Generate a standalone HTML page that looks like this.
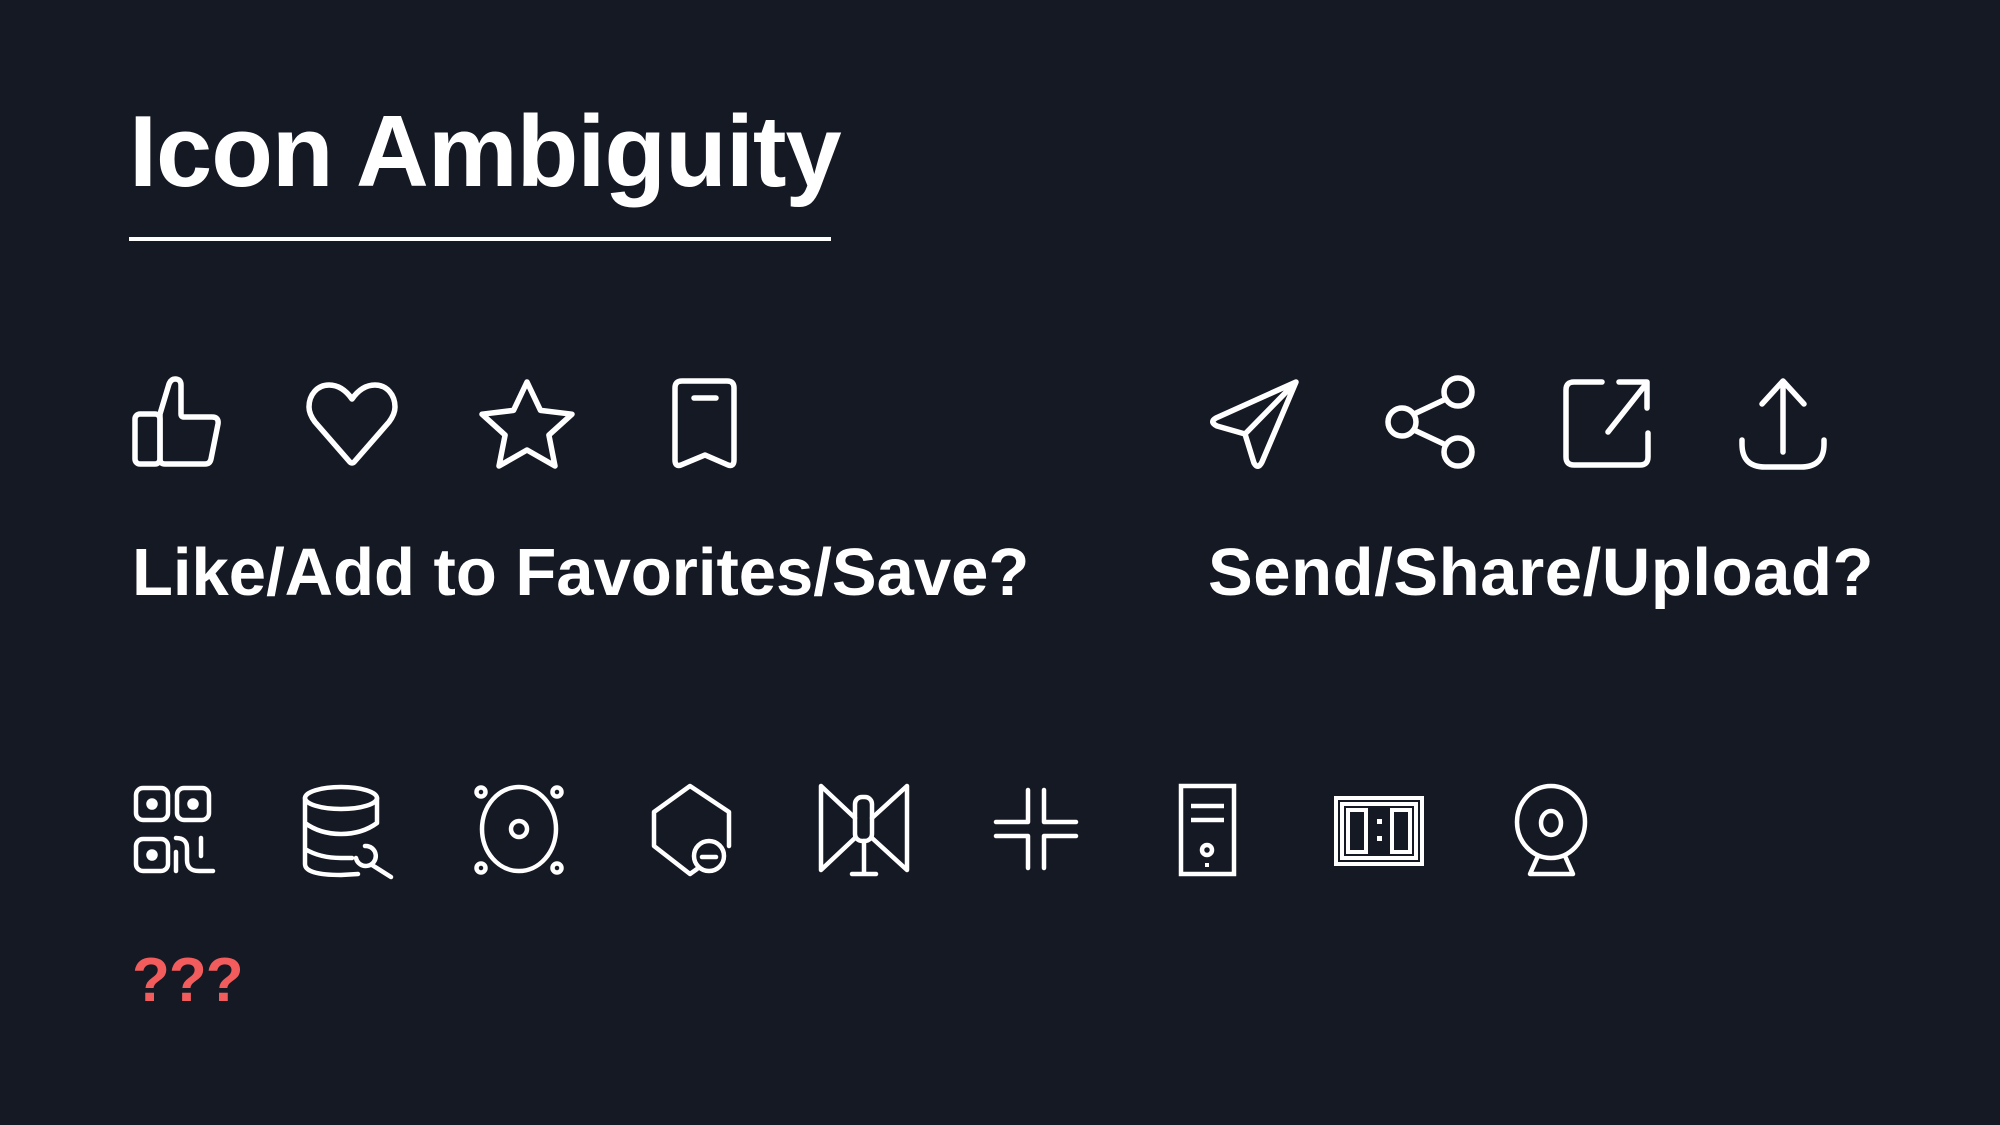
<!DOCTYPE html>
<html><head><meta charset="utf-8"><style>
html,body{margin:0;padding:0;background:#151924;}
body{width:2000px;height:1125px;position:relative;overflow:hidden;font-family:"Liberation Sans",Arial,sans-serif;font-weight:bold;color:#fff;}
.t{position:absolute;white-space:nowrap;line-height:1;}
svg{position:absolute;left:0;top:0;}
</style></head><body>
<div class="t" style="left:129px;top:102px;font-size:101px;letter-spacing:-1px;">Icon Ambiguity</div>
<div style="position:absolute;left:129px;top:237px;width:702px;height:4px;background:#fff;"></div>
<div class="t" style="left:132px;top:539px;font-size:67px;letter-spacing:0px;">Like/Add to Favorites/Save?</div>
<div class="t" style="left:1208px;top:539px;font-size:67px;letter-spacing:0.6px;">Send/Share/Upload?</div>
<div class="t" style="left:132px;top:950px;font-size:62px;letter-spacing:-1px;color:#f25c5c;">???</div>
<svg width="2000" height="1125" viewBox="0 0 2000 1125" fill="none" stroke="#fff" stroke-linecap="round" stroke-linejoin="round">
<g stroke-width="5.5">
<g transform="translate(133,378)">
<rect x="2" y="36" width="25" height="50" rx="5"/>
<path d="M27 36 L36 6 Q38 1 42 1 Q48 1 48 7 L48 36 Q48 39 51 39 L79 39 Q86 39 85 46 L78 81 Q77 86 72 86 L32 86 Q27 86 27 81 Z"/>
</g>
<path transform="translate(307,383)" d="M45 16 C38 6 30 2 22 2 C10 2 2 12 2 24 C2 30 5 35 8 39 L42 78 Q45 82 48 78 L82 39 C85 35 88 30 88 24 C88 12 80 2 68 2 C60 2 52 6 45 16 Z"/>
<polygon transform="translate(527,428)" points="0,-46 13.5,-17.6 45,-13.8 21.9,7.1 28,38 0,22 -28,38 -21.9,7.1 -45,-13.8 -13.5,-17.6"/>
<path d="M675 388 Q675 381 682 381 L727 381 Q734 381 734 388 L734 460 Q734 467 728 465 L705 455 L681 465 Q675 467 675 460 Z"/>
<path d="M694 398 L716 398"/>
<path d="M1296 382 L1216 418 Q1209 422 1217 426 L1245 434 L1254 463 Q1258 470 1262 462 Z M1245 434 L1296 382"/>
<circle cx="1458" cy="392" r="14"/><circle cx="1402" cy="422" r="14"/><circle cx="1458" cy="452" r="14"/>
<path d="M1414 414 L1446 399 M1414 430 L1446 445"/>
<path d="M1602 382 L1574 382 Q1566 382 1566 390 L1566 457 Q1566 465 1574 465 L1640 465 Q1648 465 1648 457 L1648 433"/>
<path d="M1608 432 L1646 384 M1619 382 L1647 382 L1647 408"/>
<path d="M1783 381 L1783 452 M1762 404 L1783 381 L1804 404"/>
<path d="M1742 440 L1742 444 Q1742 467 1765 467 L1801 467 Q1824 467 1824 444 L1824 440"/>
</g>
<g stroke-width="4.5">
<rect x="136" y="788" width="32" height="32" rx="7"/><rect x="177" y="788" width="32" height="32" rx="7"/><rect x="136" y="839" width="32" height="32" rx="7"/>
<circle cx="152" cy="804" r="3.5" fill="#fff"/><circle cx="193" cy="804" r="3.5" fill="#fff"/><circle cx="152" cy="855" r="3.5" fill="#fff"/>
<path d="M176 838 Q187 838 187 848 L187 860 Q187 871 199 871 L213 871 M176 852 L176 871 M201 838 L201 856"/>
<ellipse cx="341" cy="798" rx="36" ry="11"/>
<path d="M305 798 L305 864 Q305 875 341 875 L358 874 M377 798 L377 823 M305 823 Q320 834 341 834 Q362 834 377 823 M305 849 Q320 858 341 858 L352 858"/>
<path d="M365 846 A10 10 0 1 1 356 858 M372 865 L391 877"/>
<ellipse cx="519" cy="829" rx="37" ry="42"/><circle cx="519" cy="829" r="8"/>
<circle cx="481" cy="792" r="4.5"/><circle cx="557" cy="792" r="4.5"/><circle cx="481" cy="868" r="4.5"/><circle cx="557" cy="868" r="4.5"/>
<path d="M697 869 L690 874 L654 846 L654 812 L690 786 L729 812 L729 846"/>
<circle cx="709" cy="856" r="15"/><path d="M702 857 L716 857"/>
<path d="M821 786 L821 870 L855 838 M821 786 L855 818 M907 786 L907 870 L872 838 M907 786 L872 818"/>
<rect x="855" y="797" width="17" height="44" rx="7"/>
<path d="M864 841 L864 874 M852 874 L876 874"/>
<path d="M1028 790 L1028 822 L996 822 M1044 790 L1044 822 L1076 822 M1028 868 L1028 836 L996 836 M1044 868 L1044 836 L1076 836"/>
<rect x="1181" y="786" width="53" height="88" stroke-linejoin="miter"/>
<path d="M1191 806 L1224 806 M1191 820 L1224 820" stroke-linecap="butt"/>
<circle cx="1207" cy="850" r="5"/><rect x="1205" y="863" width="4" height="4" fill="#fff" stroke="none"/>
<g stroke-linejoin="miter" stroke-width="4">
<rect x="1336" y="798" width="86" height="66"/><rect x="1342" y="804" width="74" height="54"/>
<rect x="1348" y="810" width="18" height="42"/><rect x="1392" y="810" width="18" height="42"/>
</g>
<rect x="1377" y="819" width="5" height="5" fill="#fff" stroke="none"/><rect x="1377" y="836" width="5" height="5" fill="#fff" stroke="none"/>
<ellipse cx="1551" cy="822" rx="34" ry="36"/><ellipse cx="1551" cy="823" rx="10" ry="12"/>
<path d="M1538 856 L1530 874 L1573 874 L1565 856"/>
</g>
</svg>
</body></html>
